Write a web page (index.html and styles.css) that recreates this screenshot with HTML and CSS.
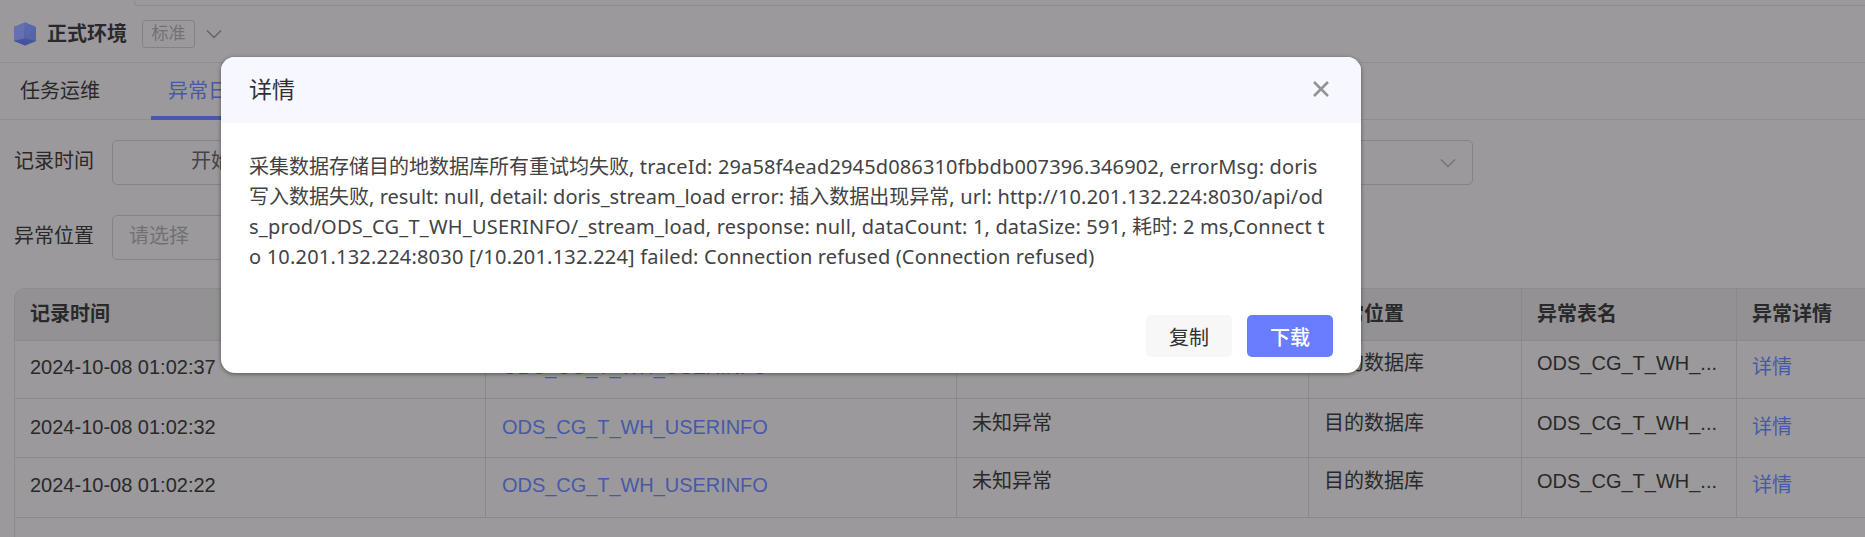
FILE: index.html
```html
<!DOCTYPE html>
<html lang="zh-CN">
<head>
<meta charset="utf-8">
<title>异常日志</title>
<link rel="stylesheet" href="styles.css">
</head>
<body>
<div class="page">
  <div class="topstrip"></div>
  <header class="env">
    <svg class="cube" width="24" height="24" viewBox="0 0 24 24">
      <path d="M12 .5 23 5v14L12 23.500 1 19V5z" fill="#5563a9"/>
      <path d="M12 .5 23 5 13 16.500 11.500 1z" fill="#5a68ae"/>
      <path d="M12 .5 11 16.500 1 19V5z" fill="#6470b0"/>
      <path d="M1 19 11.500 16.500 23 19 12 23.500z" fill="#46549c"/>
    </svg>
    <span class="env-name">正式环境</span>
    <span class="tag">标准</span>
    <svg class="env-arrow" width="16" height="10" viewBox="0 0 16 10"><path d="M1 1.500 8 8.500 15 1.500" fill="none" stroke="#656466" stroke-width="1.400"/></svg>
  </header>
  <nav class="tabs">
    <span class="tab">任务运维</span>
    <span class="tab active">异常日</span>
  </nav>
  <section class="filters">
    <div class="filter">
      <label>记录时间</label>
      <div class="field range">开始</div>
      <div class="field select"><svg width="16" height="10" viewBox="0 0 16 10"><path d="M1 1.500 8 8.500 15 1.500" fill="none" stroke="#737274" stroke-width="1.400"/></svg></div>
    </div>
    <div class="filter">
      <label>异常位置</label>
      <div class="field choose">请选择</div>
    </div>
  </section>
  <div class="table">
    <div class="row head"><div>记录时间</div><div></div><div></div><div>异常位置</div><div>异常表名</div><div>异常详情</div></div>
    <div class="row first"><div>2024-10-08 01:02:37</div><div class="link task">ODS_CG_T_WH_USERINFO</div><div></div><div class="up">目的数据库</div><div class="up">ODS_CG_T_WH_...</div><div class="link">详情</div></div>
    <div class="row"><div>2024-10-08 01:02:32</div><div class="link task">ODS_CG_T_WH_USERINFO</div><div class="up">未知异常</div><div class="up">目的数据库</div><div class="up">ODS_CG_T_WH_...</div><div class="link">详情</div></div>
    <div class="row last"><div>2024-10-08 01:02:22</div><div class="link task">ODS_CG_T_WH_USERINFO</div><div class="up">未知异常</div><div class="up">目的数据库</div><div class="up">ODS_CG_T_WH_...</div><div class="link">详情</div></div>
  </div>
</div>
<div class="dialog">
  <div class="dialog-head">
    <span>详情</span>
    <svg class="close" width="18" height="18" viewBox="0 0 18 18"><path d="M2 2 16 16M16 2 2 16" fill="none" stroke="#919294" stroke-width="2.500"/></svg>
  </div>
  <div class="message">
    <div>采集数据存储目的地数据库所有重试均失败<span class="s14">, traceId: 29a58f4ead2945d086310fbbdb007396.346902, errorMsg: doris</span></div>
    <div>写入数据失败<span class="s05">, result: null, detail: doris_stream_load error: </span>插入数据出现异常<span class="s17">, url: http://10.201.132.224:8030/api/od</span></div>
    <div><span class="s23">s_prod/ODS_CG_T_WH_USERINFO/_stream_load, </span><span class="s17">response: null, dataCount: 1, dataSize: 591, </span>耗时<span class="s17">: 2 ms,Connect t</span></div>
    <div><span class="s20">o 10.201.132.224:8030 [/10.201.132.224] </span><span class="s14">failed: Connection refused (Connection refused)</span></div>
  </div>
  <div class="actions"><button class="btn">复制</button><button class="btn primary">下载</button></div>
</div>
</body>
</html>
```
FILE: styles.css
```css
* { box-sizing: border-box; }
body {
  margin: 0;
  width: 1865px;
  height: 537px;
  overflow: hidden;
  background: #9b999b;
  color: #29292b;
  font: 20px/30px "Liberation Sans", "Noto Sans CJK SC", sans-serif;
}
.page { display: flex; flex-direction: column; height: 537px; overflow: hidden; }
.topstrip { height: 6px; margin-left: 134px; border: 1px solid #8b8e8b; border-width: 0 0 1px 1px; border-bottom-left-radius: 3px; flex: none; }
.env { display: flex; align-items: center; height: 57px; padding: 0 0 1px 13px; border-bottom: 1px solid #8b908b; flex: none; }
.cube { flex: none; }
.env-name { margin-left: 10px; font-weight: 700; }
.tag { width: 53px; height: 28px; margin-left: 15px; border: 1px solid #818581; border-radius: 3px; color: #727173; font-size: 17px; line-height: 25px; text-align: center; }
.env-arrow { margin-left: 11px; }
.tabs { display: flex; height: 57px; padding-left: 20px; border-bottom: 1px solid #8b908f; flex: none; }
.tab { height: 57px; line-height: 57px; }
.tab.active { width: 114px; margin-left: 51px; padding-left: 17px; border-bottom: 4px solid #4759a8; color: #4759a8; }
.filters { display: flex; flex-direction: column; gap: 30px; padding: 20px 0 0 14px; height: 168px; flex: none; }
.filter { display: flex; height: 45px; line-height: 42px; }
.filter label { width: 98px; }
.field { height: 45px; line-height: 41px; border: 1px solid #858386; border-radius: 5px; }
.range { width: 480px; padding-left: 78px; color: #444346; }
.select { display: flex; align-items: center; justify-content: flex-end; width: 380px; margin-left: 501px; padding-right: 16px; }
.choose { width: 480px; padding-left: 16px; color: #727073; }
.table { margin-left: 14px; width: 1851px; border: 1px solid #8a8d8a; border-width: 1px 0 0 1px; border-top-left-radius: 11px; flex: 1; overflow: hidden; }
.row { display: grid; grid-template-columns: 471px 471px 352px 213px 215px 128px; height: 59px; border-bottom: 1px solid #878a87; }
.row > div { padding: 13px 0 0 15px; border-right: 1px solid #878a87; overflow: hidden; white-space: nowrap; }
.row > div:last-child { border-right: 0; }
.row.head { height: 52px; background: #939193; font-weight: 700; }
.row.head > div { padding-top: 10px; }
.row.first { height: 58px; }
.row.first > div { padding-top: 11px; }
.row.last { height: 60px; }
.row.last > div { padding-top: 12px; }
.row > .up { padding-top: 9px; }
.row.first > .up { padding-top: 7px; }
.row.last > .up { padding-top: 8px; }
.row > .link { color: #4759a8; }
.row > .task { padding-left: 16px; letter-spacing: -.05px; }

.dialog { position: absolute; left: 221px; top: 57px; width: 1140px; height: 316px; border-radius: 14px; background: #fff; box-shadow: 0 1px 4px rgba(0,0,0,.45); }
.dialog-head { display: flex; align-items: center; justify-content: space-between; height: 66px; padding: 0 31px 0 28px; border-radius: 14px 14px 0 0; background: #f6f7ff; font-size: 23px; color: #303133; }
.close { margin-bottom: 2px; }
.message { height: 192px; padding: 29px 28px 0; color: #424245; font-family: "Noto Sans", "Noto Sans CJK SC", sans-serif; white-space: nowrap; }
.message div { height: 30px; }
.message span { white-space: pre; }
.s05 { letter-spacing: .04px; }
.s14 { letter-spacing: .14px; }
.s17 { letter-spacing: .165px; }
.s20 { letter-spacing: .2px; }
.s23 { letter-spacing: .23px; }
.actions { display: flex; justify-content: flex-end; gap: 15px; padding-right: 28px; }
.btn { width: 86px; height: 42px; padding: 0; border: 0; border-radius: 5px; background: #f7f7f8; color: #303133; font: 20px "Noto Sans CJK SC", sans-serif; }
.primary { background: #6b7dff; color: #fff; font-weight: 500; }
```
